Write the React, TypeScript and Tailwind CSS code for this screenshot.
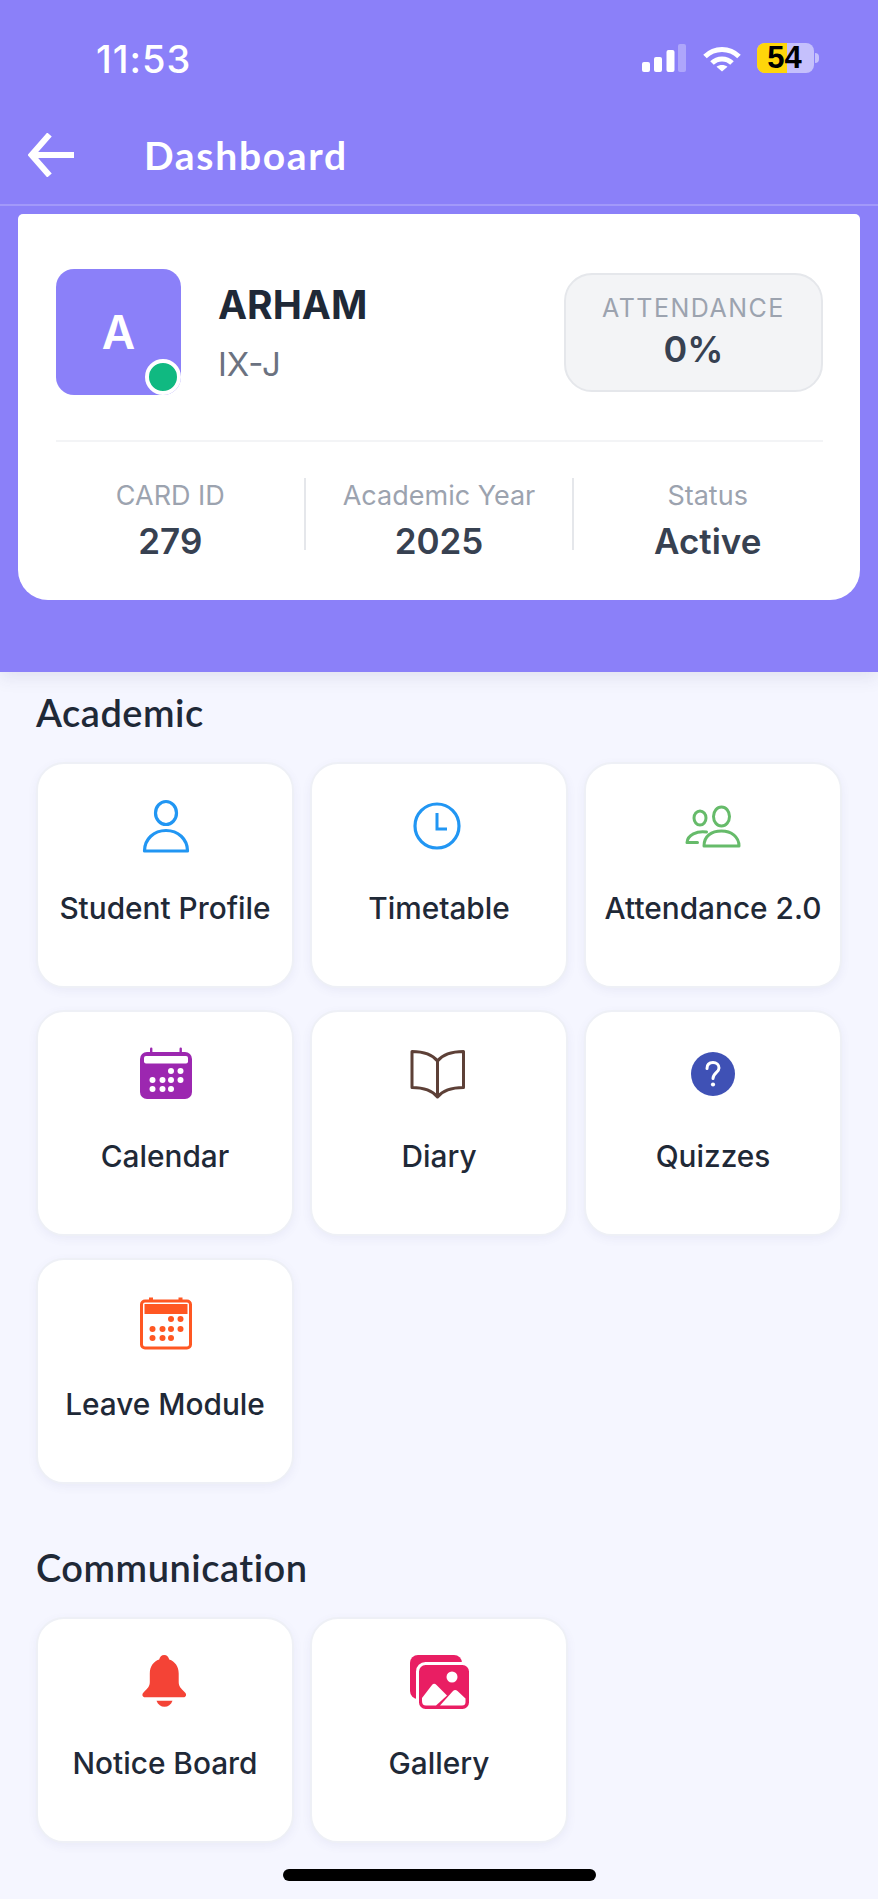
import React from 'react';

function PersonIcon() {
  return (
    <svg viewBox="0 0 60 60" className="w-[60px] h-[60px]" fill="none" stroke="#2196F3" strokeWidth="3.2">
      <ellipse cx="31" cy="17" rx="10.5" ry="11.5" />
      <path d="M9.5 55 C9.5 43 19 34.5 31 34.5 S52.5 43 52.5 55 Z" strokeLinejoin="round" />
    </svg>
  );
}

function ClockIcon() {
  return (
    <svg viewBox="0 0 60 60" className="w-[60px] h-[60px]" fill="none" stroke="#2196F3" strokeWidth="3.2">
      <circle cx="28" cy="30" r="22" />
      <path d="M28 17 V33 H38" strokeWidth="3" />
    </svg>
  );
}

function GroupIcon() {
  return (
    <svg viewBox="0 0 60 60" className="w-[60px] h-[60px]" fill="none" stroke="#66BB6A" strokeWidth="3" strokeLinejoin="round" strokeLinecap="round">
      <ellipse cx="17" cy="22" rx="6" ry="7" />
      <ellipse cx="38.5" cy="20.5" rx="8" ry="9.5" />
      <path d="M23.5 36 C14 34.5 4.5 39 4 46.5 H14.5" />
      <path d="M21 50 C21 40 28.5 35 38.5 35 S56 41 56 50 Z" />
    </svg>
  );
}

function CalendarIcon() {
  const dots = [
    [36, 27], [45.5, 27],
    [17.5, 36], [27.5, 36], [36, 36], [45.5, 36],
    [17.5, 45], [27.5, 45], [36, 45],
  ];
  return (
    <svg viewBox="0 0 60 60" className="w-[60px] h-[60px]">
      <rect x="15" y="3.5" width="2.4" height="8" rx="1.2" fill="#9C27B0" />
      <rect x="44.5" y="3.5" width="2.4" height="8" rx="1.2" fill="#9C27B0" />
      <rect x="5" y="8" width="52" height="47" rx="7" fill="#9C27B0" />
      <rect x="9" y="12" width="44" height="7.5" rx="2" fill="#fff" />
      {dots.map(([x, y]) => (
        <circle key={`${x}-${y}`} cx={x} cy={y} r="3" fill="#fff" />
      ))}
    </svg>
  );
}

function BookIcon() {
  return (
    <svg viewBox="0 0 60 60" className="w-[60px] h-[60px]" fill="none" stroke="#5D4037" strokeWidth="3" strokeLinejoin="round">
      <path d="M28.5 17 C23 10 14 7.5 3 7.5 V43.5 C14 43.5 23 46 28.5 53 C34 46 43 43.5 54.5 43.5 V7.5 C43 7.5 34 10 28.5 17 Z" />
      <path d="M28.5 17 V53" />
    </svg>
  );
}

function QuizIcon() {
  return (
    <svg viewBox="0 0 60 60" className="w-[60px] h-[60px]" fill="none">
      <circle cx="30" cy="30" r="22" fill="#3F51B5" />
      <path d="M24 24.5 C24 20.5 26.5 18.5 30 18.5 S36 20.8 36 24 C36 28.5 30 29 30 34.5" stroke="#fff" strokeWidth="3" strokeLinecap="round" />
      <circle cx="30" cy="40.5" r="2.1" fill="#fff" />
    </svg>
  );
}

function LeaveIcon() {
  const dots = [
    [36, 27], [45.5, 27],
    [17.5, 37], [27.5, 37], [36, 37], [45.5, 37],
    [17.5, 46], [27.5, 46], [36, 46],
  ];
  return (
    <svg viewBox="0 0 60 60" className="w-[60px] h-[60px]">
      <rect x="14" y="5.5" width="4" height="5" fill="#FF5722" />
      <rect x="43.5" y="5.5" width="4" height="5" fill="#FF5722" />
      <rect x="6.5" y="9" width="49" height="47" rx="3.5" fill="#fff" stroke="#FF5722" strokeWidth="3" />
      <path d="M9.5 12 H52.5 V22 H9.5 Z" fill="#FF5722" />
      {dots.map(([x, y]) => (
        <circle key={`${x}-${y}`} cx={x} cy={y} r="3" fill="#FF5722" />
      ))}
    </svg>
  );
}

function BellIcon() {
  return (
    <svg viewBox="0 0 60 60" className="w-[60px] h-[60px]" fill="#F44336">
      <path d="M29.2 4 C26.5 4 24.8 6 24.2 8.6 C18.5 10.5 14.8 15.5 14.8 22.5 V31 C14.8 35.5 12.5 37.5 8.5 41.5 C6.5 43.5 7.5 46.3 10 46.3 H48.5 C51 46.3 52 43.5 50 41.5 C46 37.5 43.7 35.5 43.7 31 V22.5 C43.7 15.5 40 10.5 34.2 8.6 C33.6 6 31.9 4 29.2 4 Z" />
      <path d="M21.5 49.8 H37.5 C36 53.8 33 55.8 29.5 55.8 S23 53.8 21.5 49.8 Z" />
    </svg>
  );
}

function GalleryIcon() {
  return (
    <svg viewBox="0 0 60 60" className="w-[60px] h-[60px]">
      <rect x="1" y="4" width="52" height="44" rx="8" fill="#E91E63" />
      <rect x="8.5" y="12.5" width="53" height="47" rx="8" fill="#E91E63" stroke="#fff" strokeWidth="3" />
      <circle cx="43" cy="26" r="5.5" fill="#fff" />
      <path d="M13 47 L23 34 Q25 31.5 27.5 34 L38 44.5 L27 54.5 H17 Q13 54.5 13 50 Z" fill="#fff" />
      <path d="M31 54.5 L44 40 Q46 38 48.5 40 L56.5 47.5 V51 Q56.5 54.5 53 54.5 Z" fill="#fff" />
    </svg>
  );
}

const academicTiles = [
  { label: 'Student Profile', icon: <PersonIcon /> },
  { label: 'Timetable', icon: <ClockIcon /> },
  { label: 'Attendance 2.0', icon: <GroupIcon /> },
  { label: 'Calendar', icon: <CalendarIcon /> },
  { label: 'Diary', icon: <BookIcon /> },
  { label: 'Quizzes', icon: <QuizIcon /> },
  { label: 'Leave Module', icon: <LeaveIcon /> },
];

const communicationTiles = [
  { label: 'Notice Board', icon: <BellIcon /> },
  { label: 'Gallery', icon: <GalleryIcon /> },
];

function Tile({ label, icon }: { label: string; icon: React.ReactNode }) {
  return (
    <div className="h-[226px] rounded-[28px] bg-white border-2 border-[#eef0f6] shadow-[0_3px_10px_rgba(90,90,160,0.07)] flex flex-col items-center pt-[32px]">
      {icon}
      <span className="mt-[34px] text-[29.8px] leading-[36px] font-medium text-[#1f2937] whitespace-nowrap">{label}</span>
    </div>
  );
}

function Stat({ label, value, divider }: { label: string; value: string; divider?: boolean }) {
  return (
    <div className={`flex-1 h-[72px] flex flex-col items-center ${divider ? 'border-r-2 border-[#e5e7eb]' : ''}`}>
      <span className="mt-[1px] text-[27px] leading-[34px] text-[#9ca3af]">{label}</span>
      <span className="mt-[7px] text-[35px] leading-[42px] font-semibold text-[#374151]">{value}</span>
    </div>
  );
}

export default function App() {
  return (
    <div className="relative w-[878px] h-[1899px] overflow-hidden bg-[#f5f6ff] font-['Inter',sans-serif]">
      {/* header */}
      <div className="h-[672px] bg-[#8b80f9] shadow-[0_6px_16px_rgba(60,60,120,0.1)]">
        <div className="h-[121px] flex items-start justify-between pt-[39px] pl-[96px] pr-[59px]">
          <span className="text-[38px] leading-[40px] tracking-[1px] font-medium text-white">11:53</span>
          <div className="flex items-start">
            <svg viewBox="0 0 44 28" className="w-[44px] h-[28px] mt-[5px]" fill="#fff">
              <rect x="0" y="18" width="8" height="10" rx="2" />
              <rect x="12" y="13" width="8" height="15" rx="2" />
              <rect x="24.5" y="6" width="8" height="22" rx="2" />
              <rect x="36" y="0" width="8" height="28" rx="2" opacity="0.3" />
            </svg>
            <svg viewBox="0 0 38 26" className="w-[38px] h-[26px] ml-[17px] mt-[7px]" fill="none" stroke="#fff" strokeWidth="5">
              <path d="M2 10.5 C11.5 1 26.5 1 36 10.5" />
              <path d="M9 17 C14.5 11.5 23.5 11.5 29 17" />
              <path d="M19 25.5 L13.5 20.8 C16.5 18.5 21.5 18.5 24.5 20.8 Z" fill="#fff" stroke="none" />
            </svg>
            <div className="ml-[16px] mt-[4px] w-[57px] h-[30px] rounded-[8px] bg-white/50 relative flex items-center justify-center">
              <div className="absolute left-0 top-0 bottom-0 w-[30px] rounded-l-[8px] bg-[#ffd60a]" />
              <span className="relative -ml-[2px] text-[31px] leading-[30px] font-bold text-black font-['Liberation_Sans',sans-serif]">54</span>
            </div>
            <div className="ml-[1px] mt-[14px] w-[4px] h-[10px] rounded-r-full bg-white/50" />
          </div>
        </div>

        <div className="h-[85px] flex items-center border-b-2 border-white/20 pl-[28px] pb-[15px]">
          <svg viewBox="0 0 46 44" className="w-[46px] h-[44px]" fill="none" stroke="#fff" strokeWidth="6">
            <path d="M21.5 1.5 L3.5 22 L21.5 42.5" />
            <path d="M3 22 H46" />
          </svg>
          <span className="ml-[70px] text-[39px] leading-[44px] font-bold tracking-[1.7px] text-white font-['Lato',sans-serif]">Dashboard</span>
        </div>

        <div className="mt-[8px] mx-[18px] h-[386px] rounded-t-[5px] rounded-b-[30px] bg-white">
          <div className="ml-[38px] mr-[37px] pt-[55px] h-[228px] border-b-2 border-[#f3f4f6] flex items-start justify-between">
            <div className="flex items-start">
              <div className="relative w-[125px] h-[126px] rounded-[18px] bg-[#8b80f9] flex items-center justify-center">
                <span className="text-[46px] leading-none font-semibold text-white">A</span>
                <div className="absolute right-0 bottom-0 w-[36px] h-[36px] rounded-full bg-[#10b981] border-[4px] border-white" />
              </div>
              <div className="ml-[37px] pt-[13px]">
                <div className="text-[39px] leading-[46px] font-bold text-[#1f2937]">ARHAM</div>
                <div className="mt-[16px] text-[33px] leading-[40px] text-[#6b7280]">IX-J</div>
              </div>
            </div>
            <div className="mt-[4px] w-[259px] h-[119px] rounded-[28px] bg-[#f3f4f6] border-2 border-[#e5e7eb] flex flex-col items-center pt-[17px]">
              <span className="text-[25px] leading-[32px] tracking-[1.5px] text-[#9ca3af]">ATTENDANCE</span>
              <span className="mt-[4px] text-[36px] leading-[42px] font-semibold text-[#374151]">0%</span>
            </div>
          </div>
          <div className="mx-[19px] mt-[36px] flex">
            <Stat label="CARD ID" value="279" divider />
            <Stat label="Academic Year" value="2025" divider />
            <Stat label="Status" value="Active" />
          </div>
        </div>
      </div>

      {/* tiles */}
      <div className="px-[36px] pt-[20px]">
        <h2 className="text-[38px] leading-[40px] font-semibold tracking-[0.5px] text-[#1f2937] font-['Lato',sans-serif]">Academic</h2>
        <div className="mt-[30px] grid grid-cols-3 gap-x-[16px] gap-y-[22px]">
          {academicTiles.map((t) => (
            <Tile key={t.label} label={t.label} icon={t.icon} />
          ))}
        </div>
        <h2 className="mt-[63px] text-[38px] leading-[40px] font-semibold tracking-[0.5px] text-[#1f2937] font-['Lato',sans-serif]">Communication</h2>
        <div className="mt-[30px] grid grid-cols-3 gap-x-[16px]">
          {communicationTiles.map((t) => (
            <Tile key={t.label} label={t.label} icon={t.icon} />
          ))}
        </div>
      </div>

      <div className="absolute left-[283px] top-[1869px] w-[313px] h-[12px] rounded-full bg-black" />
    </div>
  );
}
